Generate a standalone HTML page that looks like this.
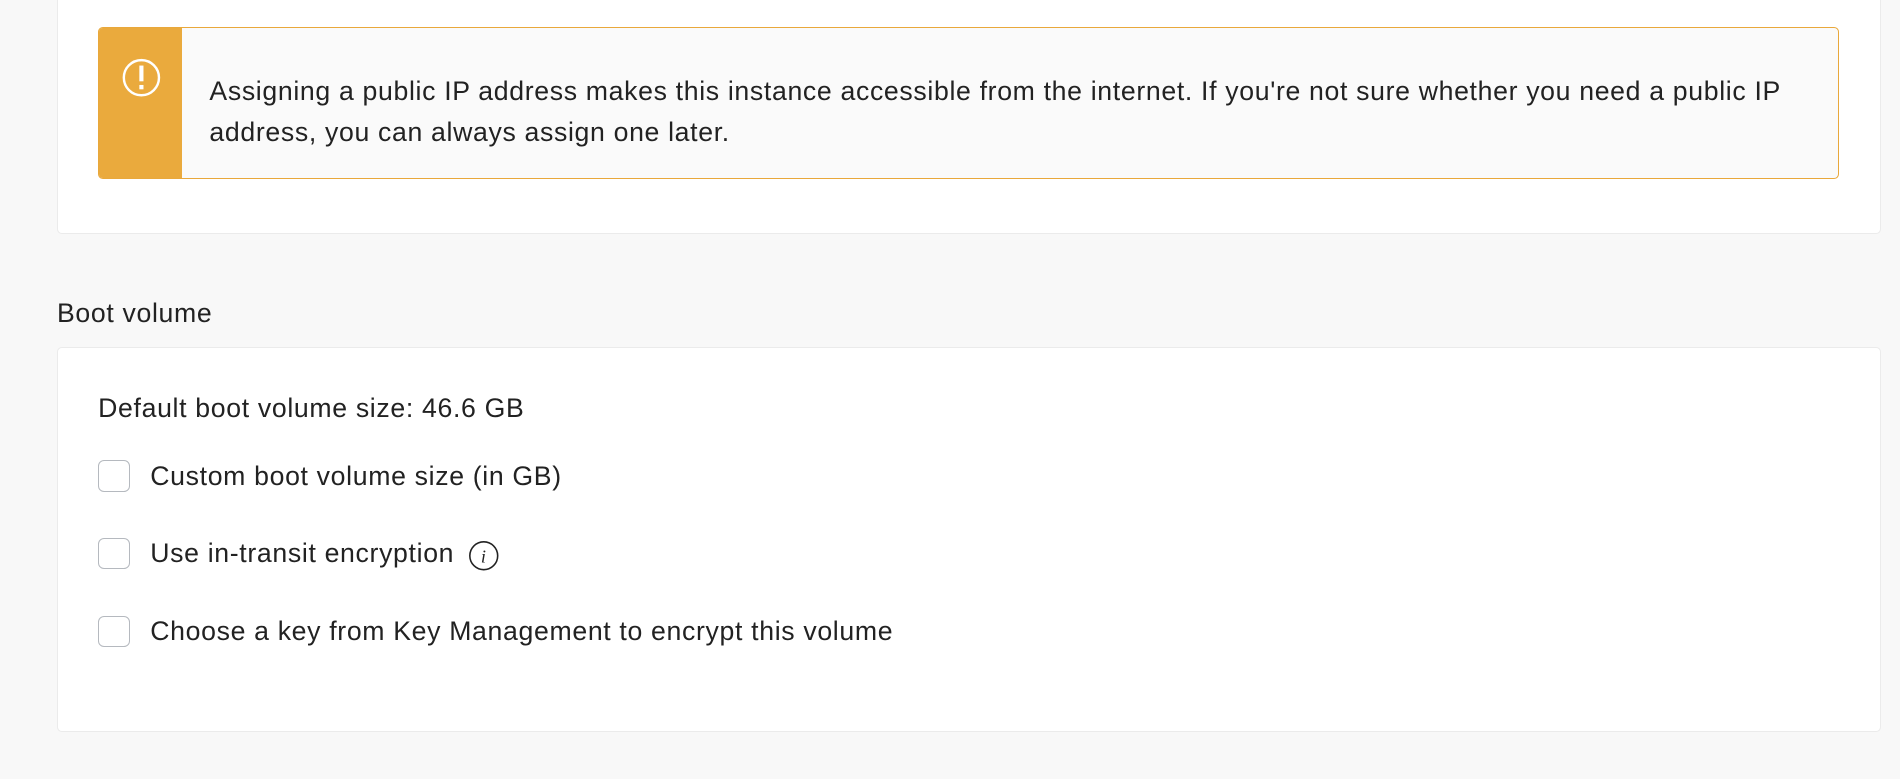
<!DOCTYPE html>
<html><head><meta charset="utf-8"><style>
html,body{margin:0;padding:0}
body{width:1568px;height:643px;overflow:hidden;background:#f8f8f8;zoom:1.2117;font-family:"Liberation Sans",Arial,sans-serif;color:#222;font-size:22px;letter-spacing:0.55px;position:relative}
.card{position:absolute;left:47px;width:1505px;background:#fff;border:1px solid #ebebeb;border-radius:4px;box-sizing:border-box}
.alert{position:absolute;left:81px;top:22px;width:1437px;height:126px;border:1px solid #e9a83b;border-radius:4px;box-sizing:border-box;background:#fafafa;overflow:hidden}
.alert .side{position:absolute;left:0;top:0;bottom:0;width:68px;background:#eaaa3d}
.alert .txt{position:absolute;left:91px;top:36px;width:1320px;line-height:34px}
.cb{position:absolute;left:81px;width:26px;height:26px;border:1px solid #b5b9bf;border-radius:5px;box-sizing:border-box;background:#fff}
.lbl{position:absolute;left:124px;line-height:24px;white-space:nowrap}
</style></head><body>
<div class="card" style="top:-10px;height:203px"></div>
<div class="alert"><div class="side">
<svg width="68" height="124" viewBox="0 0 68 124" style="position:absolute;left:0;top:0"><circle cx="35" cy="41" r="14.5" fill="none" stroke="#fff" stroke-width="2"/><rect x="33.3" y="31" width="3.4" height="13" fill="#fff"/><rect x="33.3" y="47" width="3.4" height="3.6" fill="#fff"/></svg>
</div><div class="txt">Assigning a public IP address makes this instance accessible from the internet. If you're not sure whether you need a public IP address, you can always assign one later.</div></div>
<div style="position:absolute;left:47px;top:246px">Boot volume</div>
<div class="card" style="top:286px;height:318px"></div>
<div class="lbl" style="left:81px;top:325px">Default boot volume size: 46.6 GB</div>
<div class="cb" style="top:380px"></div><div class="lbl" style="top:381px">Custom boot volume size (in GB)</div>
<div class="cb" style="top:444px"></div><div class="lbl" style="top:445px">Use in-transit encryption</div>
<svg width="26" height="26" style="position:absolute;left:386px;top:446px"><circle cx="13" cy="13" r="11.5" fill="none" stroke="#222" stroke-width="1.3"/><text x="13" y="18.5" text-anchor="middle" font-family="Liberation Serif,serif" font-style="italic" font-size="15" fill="#222">i</text></svg>
<div class="cb" style="top:508px"></div><div class="lbl" style="top:509px">Choose a key from Key Management to encrypt this volume</div>
</body></html>
